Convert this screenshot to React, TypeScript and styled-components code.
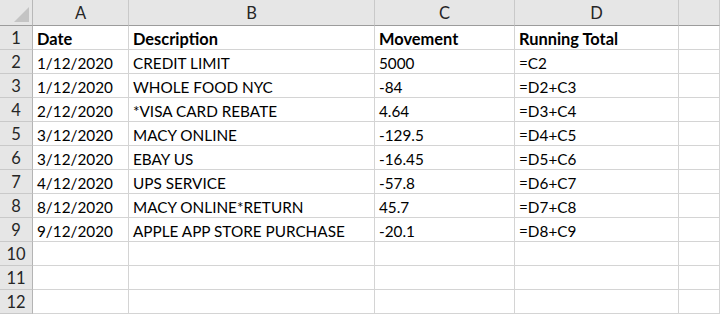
import React from "react";
import styled, { createGlobalStyle } from "styled-components";

const Global = createGlobalStyle`
  html, body { margin: 0; padding: 0; background: #ffffff; }
  body { font-family: Lato, "Open Sans", sans-serif; }
`;

const Sheet = styled.div`
  display: grid;
  grid-template-columns: 33px 96px 246px 140px 164px 1fr;
  grid-template-rows: 26px repeat(12, 24px);
  width: 720px;
  height: 315px;
  overflow: hidden;
  background: #ffffff;
`;

const Corner = styled.div`
  position: relative;
  background: #e6e6e6;
  border-right: 1px solid #b8b8b8;
  border-bottom: 1px solid #9c9c9c;
  box-sizing: border-box;
  &::after {
    content: "";
    position: absolute;
    right: 3px;
    bottom: 3px;
    width: 0;
    height: 0;
    border-left: 15px solid transparent;
    border-bottom: 15px solid #c4c4c4;
  }
`;

const ColHead = styled.div`
  background: #e6e6e6;
  border-right: 1px solid #c9c9c9;
  border-bottom: 1px solid #9c9c9c;
  box-sizing: border-box;
  display: flex;
  align-items: center;
  justify-content: center;
  font-size: 16.5px;
  color: #262626;
  padding-top: 1px;
`;

const RowHead = styled.div`
  background: #e6e6e6;
  border-right: 1px solid #b4b4b4;
  border-bottom: 1px solid #c9c9c9;
  box-sizing: border-box;
  display: flex;
  align-items: center;
  justify-content: center;
  font-size: 16.5px;
  color: #262626;
  padding-top: 1px;
`;

const Cell = styled.div<{ $bold?: boolean }>`
  border-right: 1px solid #d4d4d4;
  border-bottom: 1px solid #d4d4d4;
  box-sizing: border-box;
  display: flex;
  align-items: center;
  padding: 2px 0 0 4px;
  font-size: ${(p) => (p.$bold ? "16.4px" : "15.3px")};
  font-weight: ${(p) => (p.$bold ? 700 : 400)};
  color: #000000;
  white-space: nowrap;
  overflow: hidden;
`;

const cols = ["A", "B", "C", "D", ""];

const rows: string[][] = [
  ["Date", "Description", "Movement", "Running Total"],
  ["1/12/2020", "CREDIT LIMIT", "5000", "=C2"],
  ["1/12/2020", "WHOLE FOOD NYC", "-84", "=D2+C3"],
  ["2/12/2020", "*VISA CARD REBATE", "4.64", "=D3+C4"],
  ["3/12/2020", "MACY ONLINE", "-129.5", "=D4+C5"],
  ["3/12/2020", "EBAY US", "-16.45", "=D5+C6"],
  ["4/12/2020", "UPS SERVICE", "-57.8", "=D6+C7"],
  ["8/12/2020", "MACY ONLINE*RETURN", "45.7", "=D7+C8"],
  ["9/12/2020", "APPLE APP STORE PURCHASE", "-20.1", "=D8+C9"],
  ["", "", "", ""],
  ["", "", "", ""],
  ["", "", "", ""],
];

export default function App() {
  return (
    <>
      <Global />
      <Sheet>
        <Corner />
        {cols.map((c, i) => (
          <ColHead key={i}>{c}</ColHead>
        ))}
        {rows.map((r, ri) => (
          <React.Fragment key={ri}>
            <RowHead>{ri + 1}</RowHead>
            {r.map((v, ci) => (
              <Cell key={ci} $bold={ri === 0}>
                {v}
              </Cell>
            ))}
            <Cell />
          </React.Fragment>
        ))}
      </Sheet>
    </>
  );
}
